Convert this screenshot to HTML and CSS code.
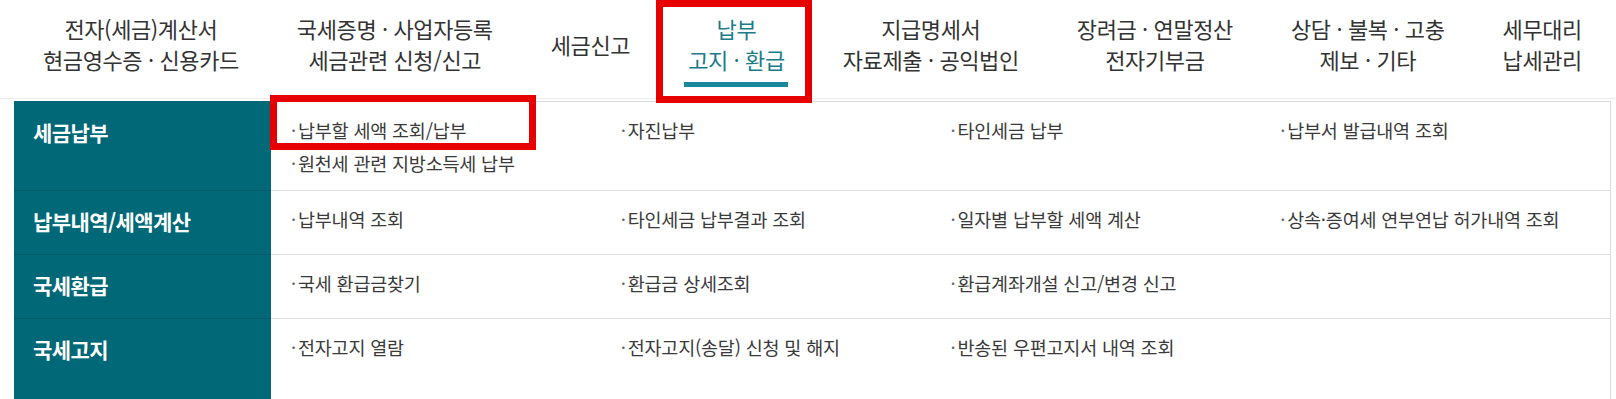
FILE: index.html
```html
<!DOCTYPE html>
<html lang="ko">
<head>
<meta charset="utf-8">
<title>납부 고지 · 환급</title>
<link rel="stylesheet" href="styles.css">
</head>
<body>
<header class="gnb">
  <ul class="gnb-list">
    <li class="gnb-item"><a>전자(세금)계산서<br>현금영수증 · 신용카드</a></li>
    <li class="gnb-item"><a>국세증명 · 사업자등록<br>세금관련 신청/신고</a></li>
    <li class="gnb-item"><a>세금신고</a></li>
    <li class="gnb-item is-active"><a>납부<br>고지 · 환급</a><span class="gnb-bar"></span><span class="mark mark-gnb"></span></li>
    <li class="gnb-item"><a>지급명세서<br>자료제출 · 공익법인</a></li>
    <li class="gnb-item"><a>장려금 · 연말정산<br>전자기부금</a></li>
    <li class="gnb-item"><a>상담 · 불복 · 고충<br>제보 · 기타</a></li>
    <li class="gnb-item"><a>세무대리<br>납세관리</a></li>
  </ul>
</header>

<section class="sub">
  <div class="sub-row">
    <h3 class="sub-title">세금납부</h3>
    <ul class="sub-links">
      <li class="sub-link">납부할 세액 조회/납부<span class="mark mark-link"></span></li>
      <li class="sub-link">자진납부</li>
      <li class="sub-link">타인세금 납부</li>
      <li class="sub-link">납부서 발급내역 조회</li>
      <li class="sub-link">원천세 관련 지방소득세 납부</li>
    </ul>
  </div>
  <div class="sub-row">
    <h3 class="sub-title">납부내역/세액계산</h3>
    <ul class="sub-links">
      <li class="sub-link">납부내역 조회</li>
      <li class="sub-link">타인세금 납부결과 조회</li>
      <li class="sub-link">일자별 납부할 세액 계산</li>
      <li class="sub-link">상속·증여세 연부연납 허가내역 조회</li>
    </ul>
  </div>
  <div class="sub-row">
    <h3 class="sub-title">국세환급</h3>
    <ul class="sub-links">
      <li class="sub-link">국세 환급금찾기</li>
      <li class="sub-link">환급금 상세조회</li>
      <li class="sub-link">환급계좌개설 신고/변경 신고</li>
    </ul>
  </div>
  <div class="sub-row sub-row-last">
    <h3 class="sub-title">국세고지</h3>
    <ul class="sub-links">
      <li class="sub-link">전자고지 열람</li>
      <li class="sub-link">전자고지(송달) 신청 및 해지</li>
      <li class="sub-link">반송된 우편고지서 내역 조회</li>
    </ul>
  </div>
</section>
</body>
</html>
```
FILE: styles.css
```css
* {
  box-sizing: border-box;
}

html, body {
  margin: 0;
  padding: 0;
  background: #ffffff;
  overflow: hidden;
}

body {
  font-family: "Noto Sans CJK KR", "Noto Sans", sans-serif;
  color: #333333;
}

ul {
  list-style: none;
  margin: 0;
  padding: 0;
}

h3 {
  margin: 0;
}

/* ---------- top navigation ---------- */
.gnb {
  height: 99px;
  padding: 13px 34px 0 43px;
  border-bottom: 1px solid #ececec;
}

.gnb-list {
  display: flex;
  justify-content: space-between;
  align-items: center;
  height: 62px;
}

.gnb-item {
  position: relative;
  display: flex;
  align-items: center;
  height: 100%;
}

.gnb-item a {
  display: block;
  font-size: 22px;
  line-height: 31px;
  letter-spacing: -0.4px;
  text-align: center;
  color: #333333;
  white-space: nowrap;
}

.gnb-item.is-active a {
  color: #1a7c89;
}

.gnb-bar {
  position: absolute;
  left: -4px;
  right: -3px;
  top: calc(100% + 7px);
  height: 5px;
  background: #17899a;
}

/* annotation frames */
.mark {
  position: absolute;
  border: 7px solid #e60000;
  pointer-events: none;
}

.mark-gnb {
  left: -32px;
  right: -27px;
  top: -13px;
  bottom: -28px;
}

.mark-link {
  left: -21px;
  top: -19px;
  width: 266px;
  height: 55px;
}

/* ---------- sub menu table ---------- */
.sub {
  margin: 2px 5px 0 14px;
}

.sub-row {
  display: grid;
  grid-template-columns: 257px 1fr;
}

.sub-title {
  background: #006877;
  color: #ffffff;
  font-size: 21px;
  font-weight: 700;
  line-height: 26px;
  letter-spacing: -0.6px;
  padding: 17px 19px 20px;
  border-bottom: 1px solid #005a67;
}

.sub-row:first-child .sub-title {
  border-top: 1px solid #006877;
}

.sub-links {
  display: grid;
  grid-template-columns: repeat(4, 1fr);
  align-content: start;
  padding: 12px 0 10px 20px;
  border-right: 1px solid #dddddd;
  border-bottom: 1px solid #dddddd;
}

.sub-row:first-child .sub-links {
  border-top: 1px solid #dddddd;
}

.sub-row-last .sub-title,
.sub-row-last .sub-links {
  min-height: 120px;
}

.sub-link {
  position: relative;
  font-size: 18.5px;
  line-height: 33px;
  letter-spacing: -0.2px;
  color: #3a3a3a;
  white-space: nowrap;
}

.sub-link::before {
  content: "·";
  color: #666666;
  margin-right: 2px;
}
```
